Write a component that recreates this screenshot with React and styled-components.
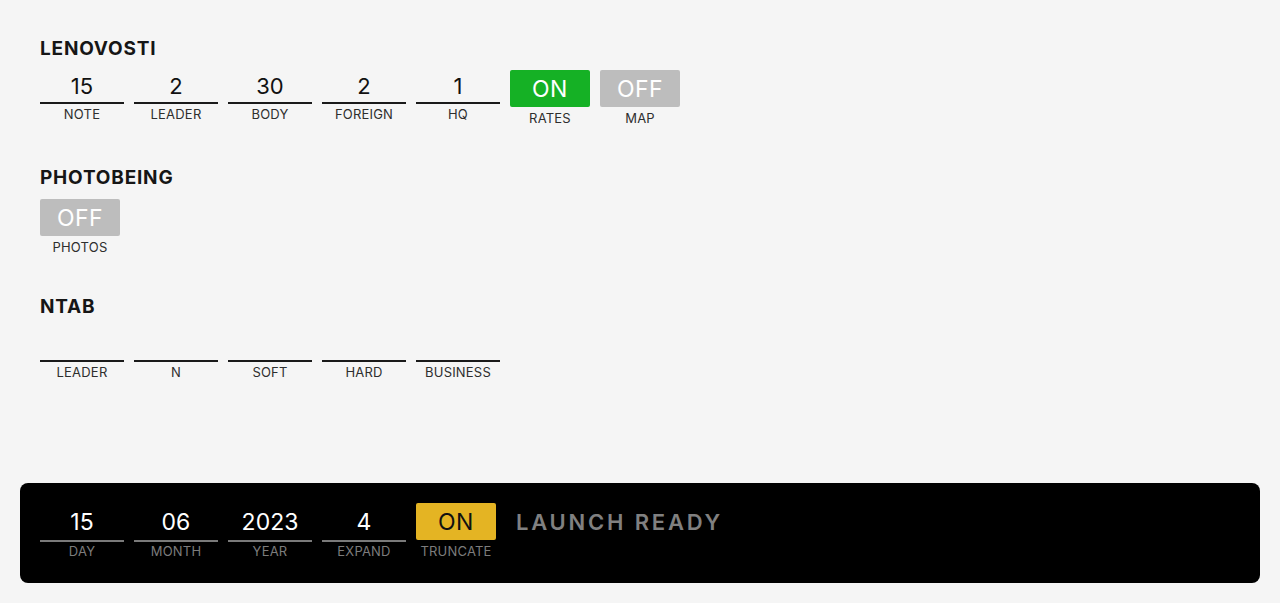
import React from 'react'
import styled, { createGlobalStyle } from 'styled-components'

const GlobalStyle = createGlobalStyle`
    html, body {
        margin: 0;
        padding: 0;
        background: #f5f5f5;
        font-family: Inter, "Noto Sans", "Liberation Sans", sans-serif;
        color: #111;
    }
`

const sections = [
    {
        title: 'Lenovosti',
        items: [
            { type: 'field', label: 'Note', value: '15' },
            { type: 'field', label: 'Leader', value: '2' },
            { type: 'field', label: 'Body', value: '30' },
            { type: 'field', label: 'Foreign', value: '2' },
            { type: 'field', label: 'HQ', value: '1' },
            { type: 'toggle', label: 'Rates', on: true },
            { type: 'toggle', label: 'Map', on: false },
        ],
    },
    {
        title: 'Photobeing',
        items: [{ type: 'toggle', label: 'Photos', on: false }],
    },
    {
        title: 'NTAB',
        items: [
            { type: 'field', label: 'Leader', value: '' },
            { type: 'field', label: 'N', value: '' },
            { type: 'field', label: 'Soft', value: '' },
            { type: 'field', label: 'Hard', value: '' },
            { type: 'field', label: 'Business', value: '' },
        ],
    },
]

const footerFields = [
    { label: 'Day', value: '15' },
    { label: 'Month', value: '06' },
    { label: 'Year', value: '2023' },
    { label: 'Expand', value: '4' },
]

function Field({ label, value, dark }) {
    return (
        <FieldWrap>
            <FieldValue dark={dark}>{value}</FieldValue>
            <FieldLabel dark={dark}>{label}</FieldLabel>
        </FieldWrap>
    )
}

function Toggle({ label, on, dark }) {
    return (
        <ToggleWrap>
            <ToggleBtn on={on} dark={dark}>{on ? 'ON' : 'OFF'}</ToggleBtn>
            <ToggleLabel dark={dark}>{label}</ToggleLabel>
        </ToggleWrap>
    )
}

function App() {
    return (
        <Page>
            <GlobalStyle />
            <Main>
                {sections.map(section => (
                    <Section key={section.title}>
                        <Title>{section.title}</Title>
                        <Row>
                            {section.items.map((item, i) =>
                                item.type === 'field'
                                    ? <Field key={i} label={item.label} value={item.value} />
                                    : <Toggle key={i} label={item.label} on={item.on} />
                            )}
                        </Row>
                    </Section>
                ))}
            </Main>

            <Bar>
                <Row>
                    {footerFields.map(f => (
                        <Field key={f.label} dark label={f.label} value={f.value} />
                    ))}
                    <Toggle dark label="Truncate" on />
                    <Status>Launch Ready</Status>
                </Row>
            </Bar>
        </Page>
    )
}

export default App


const Page = styled.div`
    height: 100vh;
    box-sizing: border-box;
    display: flex;
    flex-direction: column;
    justify-content: space-between;
    padding-bottom: 20px;
`

const Main = styled.div`
    padding: 36px 40px 0;
    display: flex;
    flex-direction: column;
    gap: 39px;
`

const Section = styled.div`
    display: flex;
    flex-direction: column;
    gap: 8px;
`

const Title = styled.h2`
    margin: 0;
    font-size: 19px;
    line-height: 26px;
    font-weight: 700;
    letter-spacing: 0.8px;
    text-transform: uppercase;
    color: #161616;
`

const Row = styled.div`
    display: flex;
    align-items: flex-start;
    gap: 10px;
`

const FieldWrap = styled.div`
    width: 84px;
    display: flex;
    flex-direction: column;
    align-items: center;
`

const ToggleWrap = styled(FieldWrap)`
    width: 80px;
`

const FieldValue = styled.div`
    width: 100%;
    box-sizing: border-box;
    height: ${props => props.dark ? '39px' : '34px'};
    display: flex;
    align-items: center;
    justify-content: center;
    font-size: ${props => props.dark ? '23px' : '22px'};
    font-weight: 400;
    color: ${props => props.dark ? '#fff' : '#111'};
    border-bottom: 2px solid ${props => props.dark ? '#7a7a7a' : '#1a1a1a'};
`

const FieldLabel = styled.div`
    margin-top: ${props => props.dark ? '1px' : '2px'};
    font-size: 13px;
    line-height: 16px;
    font-weight: 400;
    letter-spacing: 0.2px;
    text-transform: uppercase;
    color: ${props => props.dark ? '#7c7c7c' : '#2e2e2e'};
`

const ToggleBtn = styled.div`
    width: 80px;
    height: 37px;
    border-radius: 2px;
    display: flex;
    align-items: center;
    justify-content: center;
    font-size: 23px;
    font-weight: 400;
    letter-spacing: 0.5px;
    background: ${props => props.dark ? '#e4b423' : props.on ? '#15b125' : '#bdbdbd'};
    color: ${props => props.dark ? '#111' : '#fff'};
`

const ToggleLabel = styled(FieldLabel)`
    margin-top: 3px;
`

const Bar = styled.div`
    margin: 0 20px;
    height: 100px;
    box-sizing: border-box;
    padding: 20px;
    background: #000;
    border-radius: 8px;
`

const Status = styled.div`
    margin-left: 10px;
    height: 37px;
    display: flex;
    align-items: center;
    font-size: 22px;
    font-weight: 600;
    letter-spacing: 2.8px;
    text-transform: uppercase;
    color: #808080;
`
